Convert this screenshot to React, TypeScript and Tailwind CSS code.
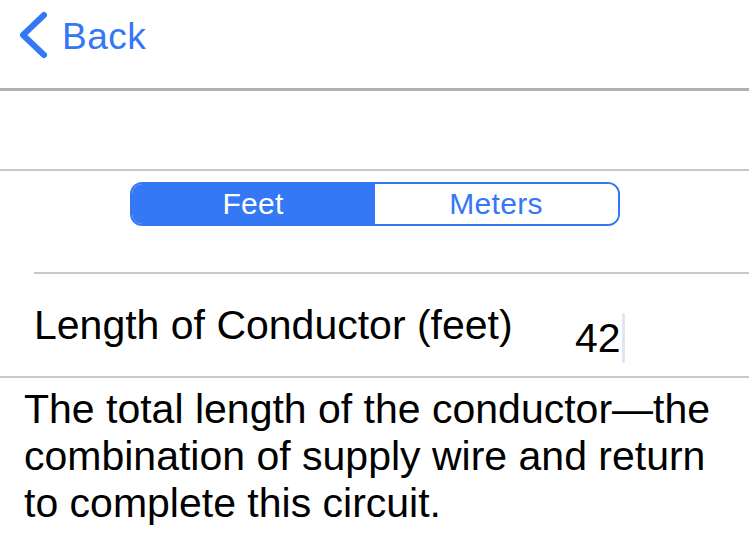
import { useState } from 'react';

const font = { fontFamily: '"Liberation Sans", Arial, sans-serif' };

function BackButton() {
  return (
    <div className="flex items-start pt-[10px] pl-[18px] h-[88px]">
      <svg width="32" height="52" viewBox="0 0 32 52" fill="none">
        <path
          d="M26 5 L5 25 L26 45"
          stroke="#3478f6"
          strokeWidth="6"
          strokeLinecap="round"
          strokeLinejoin="round"
        />
      </svg>
      <span className="ml-[12px] mt-[7px] text-[37px] leading-[40px] tracking-[0.5px] text-[#3478f6]">
        Back
      </span>
    </div>
  );
}

function UnitToggle() {
  const [unit, setUnit] = useState<'feet' | 'meters'>('feet');
  return (
    <div className="flex justify-center pt-[11px] h-[101px]">
      <div className="flex w-[490px] h-[44px] border-2 border-[#3478f6] rounded-[12px] overflow-hidden">
        <button
          onClick={() => setUnit('feet')}
          className={
            unit === 'feet'
              ? 'flex-1 flex items-center justify-center bg-[#3478f6] text-white text-[30px] leading-none tracking-[0.3px]'
              : 'flex-1 flex items-center justify-center bg-white text-[#3478f6] text-[30px] leading-none tracking-[0.3px]'
          }
        >
          Feet
        </button>
        <button
          onClick={() => setUnit('meters')}
          className={
            unit === 'meters'
              ? 'flex-1 flex items-center justify-center bg-[#3478f6] text-white text-[30px] leading-none tracking-[0.3px]'
              : 'flex-1 flex items-center justify-center bg-white text-[#3478f6] text-[30px] leading-none tracking-[0.3px]'
          }
        >
          Meters
        </button>
      </div>
    </div>
  );
}

export default function App() {
  return (
    <div className="w-[749px] h-[551px] bg-white overflow-hidden text-black" style={font}>
      <BackButton />
      <div className="h-[3px] bg-[#b0b0b0]" />

      {/* empty header band */}
      <div className="h-[78px]" />
      <div className="h-[2px] bg-[#c8c7cc]" />

      <UnitToggle />

      <div className="pl-[34px]">
        <div className="h-[1.5px] bg-[#c8c7cc]" />
      </div>

      {/* input row */}
      <div className="flex h-[102px] pl-[34px]">
        <div className="w-[541px] shrink-0 pt-[28px] text-[41px] leading-[47px]">
          Length of Conductor (feet)
        </div>
        <div className="flex items-start pt-[39px]">
          <span className="mt-[2px] text-[41px] leading-[47px]">42</span>
          <span className="ml-[1px] w-[3px] h-[50px] rounded-full bg-[#dfe4f7]" />
        </div>
      </div>
      <div className="h-[2px] bg-[#c8c7cc]" />

      <p className="pt-[8px] px-[24px] text-[41px] leading-[47px]">
        The total length of the conductor—the combination of supply wire and return to complete this circuit.
      </p>
    </div>
  );
}
